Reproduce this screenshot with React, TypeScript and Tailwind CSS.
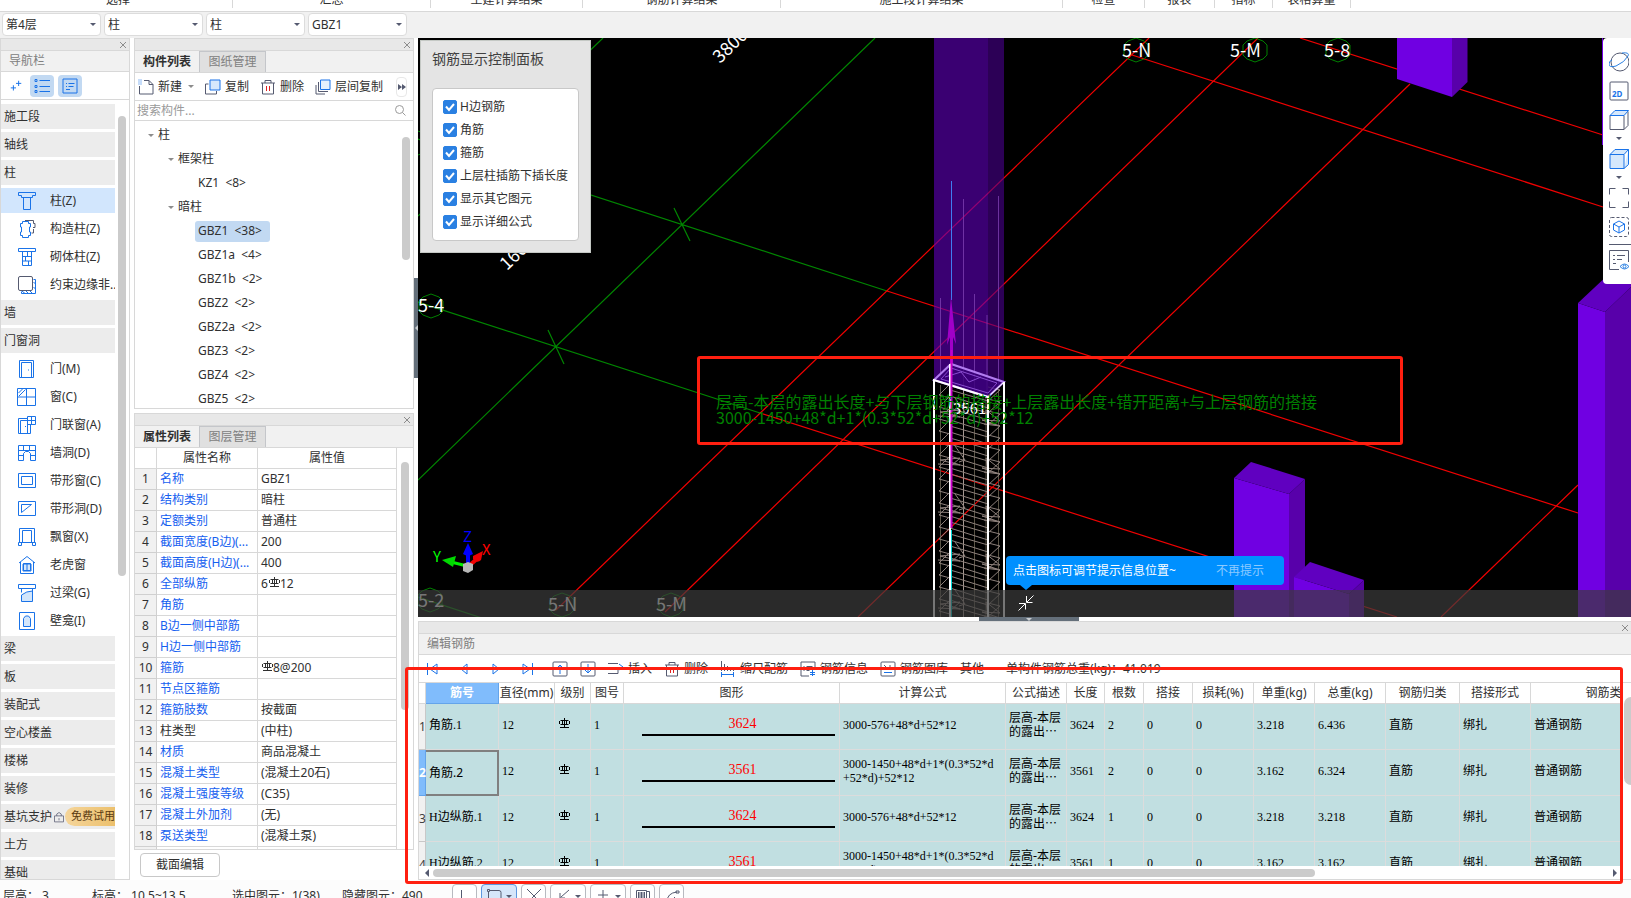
import type { ReactNode } from 'react';

const ribbonGroups = [
  { label: '选择', width: 'w-[233px] pl-1' },
  { label: '汇总', width: 'w-[198px]' },
  { label: '土建计算结果', width: 'w-[152px]' },
  { label: '钢筋计算结果', width: 'w-[198px]' },
  { label: '施工段计算结果', width: 'w-[282px]' },
  { label: '检查', width: 'w-[82px]' },
  { label: '报表', width: 'w-[70px]' },
  { label: '指标', width: 'w-[58px]' },
  { label: '表格算量', width: 'w-[78px]' },
];

const filters = [
  { name: '楼层', value: '第4层' },
  { name: '构件大类', value: '柱' },
  { name: '构件类型', value: '柱' },
  { name: '构件', value: 'GBZ1' },
];

type NavEntry = { label: string; icon?: ReactNode; trial?: boolean; active?: boolean };

const navEntries: NavEntry[] = [
  { label: '施工段' },
  { label: '轴线' },
  { label: '柱' },
  {
    label: '柱(Z)',
    active: true,
    icon: <path d="M1.500 1.500h17v3h-3v2h-11v-2h-3zM6.500 6.500v12h7v-12" />,
  },
  {
    label: '构造柱(Z)',
    icon: (
      <>
        <path d="M8 1.500h8.500v3h1.500v4h-2M16.500 10v4h-2" stroke="#555a70" />
        <path d="M5.500 2.500h6v2h2v3.500h-1v5h1v3.500h-2v2h-6v-2h-2V13h1V8h-1V4.500h2z" />
      </>
    ),
  },
  {
    label: '砌体柱(Z)',
    icon: <path d="M1.500 1.500h17v3h-17zM5.500 4.500v14h9v-14M5.500 9.500h9M5.500 14h9M10.500 4.500v5M8.500 9.500v4.500M11.500 14v4.500" />,
  },
  {
    label: '约束边缘非..',
    icon: (
      <>
        <path d="M5 16l3 2.500M9 16l2.500 2.500M13 16l2.500 2.500M16.500 12l2 2M16.500 7l2 2M4.500 16.500v2h14v-14h-2" />
        <rect x="1.500" y="1.500" width="14" height="14" rx="1.500" stroke="#555a70" fill="#fff" />
      </>
    ),
  },
  { label: '墙' },
  { label: '门窗洞' },
  { label: '门(M)', icon: <path d="M2.500 1.500h14v17h-14zM4.500 18.500v-15h10v15M11.500 10.500v1" /> },
  { label: '窗(C)', icon: <path d="M.5 1.500h18v17H.5zM9.500 1.500v17M.5 10h18M1.500 6l4-4M2 9l6.500-6.500" /> },
  {
    label: '门联窗(A)',
    icon: <path d="M10.500 3.500h-9v15h12v-9M3.500 18.500v-13h7v13M8.500 11v1M10.500 1.500h8v8h-8zM14.500 1.500v8M10.500 5.500h8" />,
  },
  {
    label: '墙洞(D)',
    icon: <path d="M1.500 2.500h17v15h-5v-7l-2-2h-3l-2 2v7h-5zM1.500 7.500h17M6.500 2.500v5M12.500 2.500v5M1.500 12.500h5M13.500 12.500h5" />,
  },
  { label: '带形窗(C)', icon: <path d="M1.500 2.500h17v14h-17zM4.500 5.500h11v8h-11z" /> },
  { label: '带形洞(D)', icon: <path d="M1.500 2.500h17v14h-17zM4.500 13.500v-8h10l-10 8" /> },
  { label: '飘窗(X)', icon: <path d="M2.500 1.500h15v14h-15zM5.500 3.500h9v12M5.500 3.500v12M1.500 15.500h3v3h-3zM15.500 15.500h3v3h-3z" /> },
  {
    label: '老虎窗',
    icon: (
      <>
        <path d="M6 9h8v7H6z" fill="#d3e6fb" />
        <path d="M2 8l8-6.500L18 8M3.500 7v11.500h13V7M6.500 8.500h7v7h-7zM10 8.500v7" />
      </>
    ),
  },
  {
    label: '过梁(G)',
    icon: (
      <>
        <path d="M4.500 12q5-4 11-4v10.500h-11z" fill="#d3e6fb" />
        <path d="M1.500 1.500h17v4h-17zM4.500 5.500v4M15.500 5.500v4" />
      </>
    ),
  },
  {
    label: '壁龛(I)',
    icon: (
      <>
        <path d="M2.500 1.500h15v17h-15z" />
        <path d="M6.500 15.500v-8l2-2.500h3l2 2.500v8z" fill="#d3e6fb" />
      </>
    ),
  },
  { label: '梁' },
  { label: '板' },
  { label: '装配式' },
  { label: '空心楼盖' },
  { label: '楼梯' },
  { label: '装修' },
  { label: '基坑支护', trial: true },
  { label: '土方' },
  { label: '基础' },
];

const components = ['GBZ1  <38>', 'GBZ1a  <4>', 'GBZ1b  <2>', 'GBZ2  <2>', 'GBZ2a  <2>', 'GBZ3  <2>', 'GBZ4  <2>', 'GBZ5  <2>'];

const properties: { name: string; value: ReactNode; plain?: boolean }[] = [
  { name: '名称', value: 'GBZ1' },
  { name: '结构类别', value: '暗柱' },
  { name: '定额类别', value: '普通柱' },
  { name: '截面宽度(B边)(...', value: '200' },
  { name: '截面高度(H边)(...', value: '400' },
  { name: '全部纵筋', value: <>6<Rebar />12</> },
  { name: '角筋', value: '' },
  { name: 'B边一侧中部筋', value: '' },
  { name: 'H边一侧中部筋', value: '' },
  { name: '箍筋', value: <><Rebar />8@200</> },
  { name: '节点区箍筋', value: '' },
  { name: '箍筋肢数', value: '按截面' },
  { name: '柱类型', value: '(中柱)', plain: true },
  { name: '材质', value: '商品混凝土' },
  { name: '混凝土类型', value: '(混凝土20石)' },
  { name: '混凝土强度等级', value: '(C35)' },
  { name: '混凝土外加剂', value: '(无)' },
  { name: '泵送类型', value: '(混凝土泵)' },
];

const displayOptions = ['H边钢筋', '角筋', '箍筋', '上层柱插筋下插长度', '显示其它图元', '显示详细公式'];

const columns = [
  { title: '', width: 'w-[7px]' },
  { title: '筋号', width: 'w-[73px]' },
  { title: '直径(mm)', width: 'w-[56px]' },
  { title: '级别', width: 'w-[36px]' },
  { title: '图号', width: 'w-[33px]' },
  { title: '图形', width: 'w-[216px]' },
  { title: '计算公式', width: 'w-[166px]' },
  { title: '公式描述', width: 'w-[61px]' },
  { title: '长度', width: 'w-[38px]' },
  { title: '根数', width: 'w-[39px]' },
  { title: '搭接', width: 'w-[49px]' },
  { title: '损耗(%)', width: 'w-[61px]' },
  { title: '单重(kg)', width: 'w-[61px]' },
  { title: '总重(kg)', width: 'w-[71px]' },
  { title: '钢筋归类', width: 'w-[74px]' },
  { title: '搭接形式', width: 'w-[71px]' },
  { title: '钢筋类型', width: 'w-[158px]' },
];

const longFormula = ['3000-1450+48*d+1*(0.3*52*d', '+52*d)+52*12'];

const bars = [
  { name: '角筋.1', length: '3624', formula: ['3000-576+48*d+52*12'], count: 2, unit: '3.218', total: '6.436' },
  { name: '角筋.2', length: '3561', formula: longFormula, count: 2, unit: '3.162', total: '6.324', current: true },
  { name: 'H边纵筋.1', length: '3624', formula: ['3000-576+48*d+52*12'], count: 1, unit: '3.218', total: '3.218' },
  { name: 'H边纵筋.2', length: '3561', formula: longFormula, count: 1, unit: '3.162', total: '3.162' },
];

function Rebar() {
  return (
    <svg className="inline h-3 w-3 align-baseline" viewBox="0 0 12 12" fill="none" stroke="currentColor">
      <path d="M6.500 1v10M2.500 3.500h8M1.500 4v3M11.500 4v3M2.500 7.500h8M4.500 3v5M8.500 3v5M2 10.500h9" />
    </svg>
  );
}

function Icon({ children, className = 'h-4 w-4' }: { children: ReactNode; className?: string }) {
  return (
    <svg className={`shrink-0 ${className}`} viewBox="0 0 16 16" fill="none" stroke="#555a70">
      {children}
    </svg>
  );
}

function Caret({ className = 'fill-[#555a70]' }: { className?: string }) {
  return (
    <svg className={`h-[3px] w-[6px] shrink-0 ${className}`} viewBox="0 0 6 3">
      <path d="M0 0h6L3 3z" />
    </svg>
  );
}

function CloseStrip() {
  return (
    <div className="flex h-3 shrink-0 items-center justify-end border-b border-[#d8d8d8] bg-[#e8e8e8] pr-0.5">
      <button type="button" aria-label="关闭">
        <svg className="h-2 w-2" viewBox="0 0 8 8" stroke="#8c8c8c">
          <path d="M1 1l6 6M7 1L1 7" />
        </svg>
      </button>
    </div>
  );
}

function Tabs({ labels }: { labels: [string, string] }) {
  return (
    <div className="flex h-[22px] shrink-0 border-b border-[#d8d8d8] bg-[#f1f1f1]">
      <button type="button" className="w-[65px] border-r border-[#c4c6ca] bg-[#f1f1f1] font-bold">
        {labels[0]}
      </button>
      <button type="button" className="w-[66px] border-t border-r border-[#c4c6ca] bg-[#e0e0e0] text-[#808080]">
        {labels[1]}
      </button>
    </div>
  );
}

function Trash() {
  return (
    <Icon>
      <path d="M1 4h14M5 4V1.500h6V4M2.500 4v11h11V4" />
      <path d="M6.500 7v5M9.500 7v5" stroke="#e02020" />
    </Icon>
  );
}

function Navigator() {
  return (
    <nav className="flex w-[130px] shrink-0 flex-col border border-[#d8d8d8] bg-white">
      <CloseStrip />
      <h2 className="flex h-[21px] shrink-0 items-center border-b border-[#d8d8d8] bg-[#f1f1f1] pl-2 text-[#808080]">导航栏</h2>
      <div className="flex h-7 shrink-0 items-center gap-1 border-b border-[#d8d8d8] pl-1">
        <button type="button" aria-label="收起" className="grid h-[22px] w-[21px] place-items-center">
          <Icon className="h-3 w-4">
            <path d="M4.500 7v7M1 10.500h7M11.500 1v7M8 4.500h7" stroke="#1a73e8" strokeWidth="1.300" />
          </Icon>
        </button>
        <button type="button" aria-label="列表" className="grid h-[22px] w-6 place-items-center rounded bg-[#c2d9f2]">
          <Icon>
            <path d="M5.500 2.500H16M5.500 8.500H16M5.500 13.500H16" stroke="#1a73e8" />
            <path d="M1 1.500h2v2H1zM1 7.500h2v2H1zM1 12.500h2v2H1z" stroke="#1a73e8" />
          </Icon>
        </button>
        <button type="button" aria-label="详情" className="grid h-[22px] w-6 place-items-center rounded bg-[#c2d9f2]">
          <Icon>
            <path d="M1 1h14v14H1zM4 5.500h1M6.500 5.500h6M4 8.500h1M6.500 8.500h5M4 11.500h4" stroke="#1a73e8" />
          </Icon>
        </button>
      </div>
      <div className="flex min-h-0 flex-1 overflow-hidden pt-1">
        <ul className="flex flex-1 flex-col gap-[3px] overflow-hidden">
          {navEntries.map((entry) =>
            entry.icon ? (
              <li key={entry.label} className="h-[25px] shrink-0">
                <button
                  type="button"
                  className={`flex h-full w-full items-center gap-[13px] pl-4 whitespace-nowrap ${entry.active ? 'bg-[#d2e6fd]' : ''}`}
                >
                  <svg className="h-5 w-5 shrink-0" viewBox="0 0 20 20" fill="none" stroke="#1a73e8">
                    {entry.icon}
                  </svg>
                  {entry.label}
                </button>
              </li>
            ) : (
              <li key={entry.label} className="h-[25px] shrink-0">
                <button type="button" className="flex h-full w-full items-center bg-[#ececec] pl-[3px] whitespace-nowrap">
                  {entry.label}
                  {entry.trial && (
                    <>
                      <Icon className="ml-px h-3 w-3">
                        <path d="M2 6.500h12v8H2zM5 6.500V4q3-4 6 0v2.500M8 9.500v3" />
                      </Icon>
                      <span className="flex h-[19px] flex-1 items-center rounded-l-full bg-linear-to-r from-[#f5d59a] to-[#ecc06c] pl-1.5 text-[11px] text-[#5a3a10]">
                        免费试用
                      </span>
                    </>
                  )}
                </button>
              </li>
            ),
          )}
        </ul>
        <div className="w-[14px] shrink-0 px-[3px] pt-3">
          <div className="h-[460px] rounded-full bg-[#cbcbcb]" />
        </div>
      </div>
    </nav>
  );
}

function ComponentPanel() {
  return (
    <section className="flex h-[371px] shrink-0 flex-col border border-[#d8d8d8] bg-white">
      <CloseStrip />
      <Tabs labels={['构件列表', '图纸管理']} />
      <div className="flex h-7 shrink-0 items-center gap-[11px] border-b border-[#d8d8d8] pl-[3px] whitespace-nowrap">
        <button type="button" className="flex items-center gap-1">
          <Icon>
            <path d="M6 1.500h5l4 4v9.500H1.500V7M11 1.500v4h4" />
            <path d="M.5 1h4M.5 3h4M.5 5h4" stroke="#1a73e8" strokeDasharray="1 1" />
          </Icon>
          新建
          <span className="pl-0.5">
            <Caret className="fill-[#8c8c8c]" />
          </span>
        </button>
        <button type="button" className="flex items-center gap-1">
          <Icon>
            <path d="M3.500 5h-3v10h11v-3" />
            <path d="M5 1h10v10H5z" stroke="#1a73e8" fill="#d6e8fc" />
          </Icon>
          复制
        </button>
        <button type="button" className="flex items-center gap-1">
          <Trash />
          删除
        </button>
        <button type="button" className="flex items-center gap-1">
          <Icon>
            <path d="M3.500 3v9.500H13M1 6v9h9" />
            <path d="M5.500 1H15v9.500H5.500z" stroke="#1a73e8" fill="#e4f0fd" />
          </Icon>
          层间复制
        </button>
        <button type="button" aria-label="更多" className="ml-0.5 grid h-5 w-[11px] place-items-center rounded border border-[#e8e8e8]">
          <svg className="h-1.5 w-2" viewBox="0 0 8 6" fill="#555a70">
            <path d="M0 0l4 3-4 3zM4 0l4 3-4 3z" />
          </svg>
        </button>
      </div>
      <label className="flex h-5 shrink-0 items-center border-b border-[#d8d8d8] pr-[7px] pl-0.5">
        <input
          type="text"
          aria-label="搜索构件"
          placeholder="搜索构件..."
          className="min-w-0 flex-1 outline-none placeholder:text-[#9a9a9a]"
        />
        <svg className="h-[11px] w-[11px]" viewBox="0 0 11 11" fill="none" stroke="#9a9a9a">
          <circle cx="4.500" cy="4.500" r="4" />
          <path d="M7.500 7.500l3 3" />
        </svg>
      </label>
      <div className="flex min-h-0 flex-1 overflow-hidden">
        <ul className="flex-1 overflow-hidden pt-0.5 whitespace-pre">
          <li className="flex h-6 items-center gap-1 pl-[13px]"><Caret className="fill-[#8c8c8c]" />柱</li>
          <li className="flex h-6 items-center gap-1 pl-[33px]"><Caret className="fill-[#8c8c8c]" />框架柱</li>
          <li className="flex h-6 items-center pl-[63px]">{'KZ1  <8>'}</li>
          <li className="flex h-6 items-center gap-1 pl-[33px]"><Caret className="fill-[#8c8c8c]" />暗柱</li>
          {components.map((name, i) => (
            <li key={name} className="flex h-6 items-center pl-[60px]">
              <span className={`flex h-[21px] items-center rounded-[3px] px-[3px] ${i === 0 ? 'w-[75px] bg-[#c2d9f2]' : ''}`}>{name}</span>
            </li>
          ))}
        </ul>
        <div className="w-[14px] px-[3px] pt-4">
          <div className="h-[123px] rounded-full bg-[#cbcbcb]" />
        </div>
      </div>
    </section>
  );
}

function PropertyPanel() {
  return (
    <>
      <section className="mt-1 flex min-h-0 flex-1 flex-col border border-[#d8d8d8] bg-white">
        <CloseStrip />
        <Tabs labels={['属性列表', '图层管理']} />
        <div className="flex min-h-0 flex-1 overflow-hidden">
          <div className="flex-1 overflow-hidden">
            <table className="w-full table-fixed border-separate border-spacing-0">
              <thead>
                <tr className="h-[21px]">
                  <th className="w-[22px] border-r border-b border-[#d8d8d8] p-0" />
                  <th className="w-[101px] border-r border-b border-[#d8d8d8] p-0 font-normal">属性名称</th>
                  <th className="border-r border-b border-[#d8d8d8] p-0 font-normal">属性值</th>
                </tr>
              </thead>
              <tbody>
                {properties.map((row, i) => (
                  <tr key={row.name} className="h-[21px]">
                    <td className="border-r border-b border-[#d0d0d0] bg-[#f1f1f1] p-0 text-center">{i + 1}</td>
                    <td className={`truncate border-r border-b border-[#d8d8d8] p-0 pl-[3px] ${row.plain ? '' : 'text-[#1560f0]'}`}>
                      {row.name}
                    </td>
                    <td className="border-r border-b border-[#d8d8d8] p-0 pl-[3px]">{row.value}</td>
                  </tr>
                ))}
                <tr className="h-[21px]">
                  <td className="border-r border-[#d0d0d0] bg-[#f1f1f1]" />
                  <td className="border-r border-[#d8d8d8]" />
                  <td className="border-r border-[#d8d8d8]" />
                </tr>
              </tbody>
            </table>
          </div>
          <div className="w-4 px-1 pt-[14px]">
            <div className="h-[248px] rounded-full bg-[#cbcbcb]" />
          </div>
        </div>
      </section>
      <div className="flex h-[30px] shrink-0 items-center bg-white pl-1.5">
        <button type="button" className="h-6 w-20 rounded border border-[#c8c8c8] bg-white">
          截面编辑
        </button>
      </div>
    </>
  );
}

const ties = Array.from({ length: 19 }, (_, i) => 382 + i * 12);

function Hexagon({ x, y }: { x: number; y: number }) {
  return (
    <polygon
      points={`${x - 12},${y - 5} ${x - 8},${y - 9} ${x},${y - 12} ${x + 8},${y - 9} ${x + 12},${y - 5} ${x + 12},${y + 5} ${x + 8},${y + 9} ${x},${y + 12} ${x - 8},${y + 9} ${x - 12},${y + 5}`}
      stroke="#008000"
      fill="none"
    />
  );
}

function Scene() {
  return (
    <svg className="h-full w-full" viewBox="418 38 1213 579" preserveAspectRatio="xMinYMin slice" fill="none">
      {/* Axis grid */}
      <g stroke="#008600" strokeWidth="1.200">
        <path d="M603 38L418 216M875 38L418 480M418 139L887 291M418 302L760 413M418 597L482 618M674 208L690 241M548 330L564 364" />
      </g>
      <g stroke="#f00000" strokeWidth="1.200">
        <path d="M1149 38L556 610M1258 38L665 612M1410 84L858 617M1578 485L1441 617M887 291L1578 513M760 413L1397 617M1132 55L1603 207M1300 38L1603 135" />
      </g>
      <Hexagon x={418} y={143} />
      <Hexagon x={1136} y={50} />
      <Hexagon x={1255} y={50} />
      <Hexagon x={1338} y={50} />
      <Hexagon x={431} y={306} />
      <Hexagon x={430} y={600} />
      <Hexagon x={562} y={605} />
      <Hexagon x={671} y={605} />
      <g fill="#fff" fontSize="18" className="font-['Noto_Sans_CJK_SC',sans-serif]">
        <text x="1122" y="57">5-N</text>
        <text x="1230" y="57">5-M</text>
        <text x="1324" y="57">5-8</text>
        <text x="418" y="312">5-4</text>
        <text x="418" y="607">5-2</text>
        <text x="548" y="611">5-N</text>
        <text x="656" y="611">5-M</text>
        <text transform="translate(720 64) rotate(-44)">3800</text>
        <text transform="translate(507 271) rotate(-44)">1600</text>
      </g>

      {/* Neighbouring columns */}
      <g fill="#7000e2">
        <path d="M1397 38h55v59l-55-18zM1578 303l27 9v305h-27zM1234 478l55 16v123h-55z" />
        <path d="M1602 38h1v107h-1z" />
      </g>
      <g fill="#5800aa">
        <path d="M1452 38h15.500v44L1452 97zM1605 312l26-25v330h-26zM1289 494l16-15v138h-16z" />
      </g>
      <path d="M1578 303l32-30h21v14l-26 25zM1234 478l17-16 54 17-16 15z" fill="#6000c0" />
      <path d="M1294 577l55 17v23h-55z" fill="#7000e2" />
      <path d="M1349 594l15-14v37h-15z" fill="#5800aa" />
      <path d="M1294 577l16-15 54 18-15 14z" fill="#6000c0" />

      {/* Selected column with its reinforcement cage */}
      <path d="M934 38h54v359l-54-17z" fill="#5c00b4" fillOpacity=".63" />
      <path d="M988 38h16v344l-16 15z" fill="#4a0090" fillOpacity=".6" />
      <g stroke="#7d3fb0" strokeOpacity=".8">
        <path d="M963.500 199V390M940.500 298V380M974.500 294V390M998.500 196V385M987 315V395" />
      </g>
      <path d="M951.500 181V300" stroke="#3f7df0" />
      <path d="M951 297l-4 48 3-8v28h3v-28l3 7z" fill="#a000c8" />
      <path d="M940.500 385V617M974.500 392V617M998.500 390V617M986 395V617" stroke="#5a5446" />
      <path d="M963.500 390V617" stroke="#a39690" />
      <g stroke="#8d807b" strokeWidth="1">
        {ties.map((y) => (
          <path
            key={y}
            d={`M939 ${y + 13}l11-11 38 12M939 ${y + 13}l11 3M950 ${y + 8}l38 11M988 ${y + 19}l12-11-12-3`}
          />
        ))}
        {[412, 460, 508, 556, 604].map((y) => (
          <path key={y} d={`M938 ${y + 4}l22 1-20-5 20-2-9 8M984 ${y + 12}l16 2-18-6 18 1-14-11 2 16M955 ${y - 14}l10 14-6 2`} />
        ))}
      </g>
      <path d="M934 380l17-16 53 18-16 15z" fill="#3a0078" fillOpacity=".8" stroke="#b27cf0" strokeWidth="2" />
      <path d="M941 379l10-11 46 15-9 10zM945 377l16-5 8 10 12-5" stroke="#8a4cd0" />
      <path d="M934 617V380l54 17v220M1004 617V382M950 364v253" stroke="#fff" strokeWidth="2" />
      <path d="M988 397l16-15" stroke="#fff" />
      <path d="M951.500 350V528" stroke="#c800c8" strokeWidth="2" />
      <path d="M951.500 530V617" stroke="#00d8d8" />

      <g className="font-['Noto_Sans_CJK_SC',sans-serif]">
        <text x="953" y="414" fontSize="15" fill="#fff">3561</text>
        <g fill="#008000" fontSize="16">
          <text x="716" y="408">
            层高-本层的露出长度+与下层钢筋的搭接+上层露出长度+错开距离+与上层钢筋的搭接
          </text>
          <text x="716" y="424">3000-1450+48*d+1*(0.3*52*d+52*d)+52*12</text>
        </g>
      </g>

      {/* Orientation gizmo */}
      <path d="M467 566l-16-4" stroke="#00f000" strokeWidth="3" />
      <path d="M442 560l14-4-3 11z" fill="#00d800" />
      <path d="M470 565l8-7" stroke="#f00000" strokeWidth="4" />
      <path d="M473 556l10-5-2 9q-4 4-8-1z" fill="#f00000" />
      <path d="M468 566v-14" stroke="#0000ff" strokeWidth="4" />
      <path d="M468 543l-5 11q5 3 10 0z" fill="#0000ff" />
      <path d="M463 564l5-2 5 2v6l-5 3-5-2z" fill="#b8b8b8" />
      <g fontSize="15" className="font-['Noto_Sans_CJK_SC',sans-serif]">
        <text x="463" y="542" fill="#0000ff">Z</text>
        <text x="482" y="555" fill="#ff0000">X</text>
        <text x="433" y="562" fill="#00ff00">Y</text>
      </g>
    </svg>
  );
}

function DisplayControls() {
  return (
    <div className="absolute top-0.5 left-0.5 w-[171px] border border-[#c4c8c4] bg-[#e4e4e4] px-[11px] pt-2 pb-[11px]">
      <h2 className="h-[39px] text-sm text-[#404040]">钢筋显示控制面板</h2>
      <div className="flex flex-col gap-[5px] rounded border border-[#c8c8c8] bg-white px-2.5 py-[9px]">
        {displayOptions.map((option) => (
          <label key={option} className="flex h-[18px] items-center gap-[3px] whitespace-nowrap">
            <span className="grid h-[14px] w-[14px] shrink-0">
              <input
                type="checkbox"
                defaultChecked
                className="peer col-start-1 row-start-1 h-[14px] w-[14px] appearance-none rounded-[2px] border border-[#2a80e2] checked:bg-[#2a80e2]"
              />
              <svg
                className="pointer-events-none invisible col-start-1 row-start-1 peer-checked:visible"
                viewBox="0 0 14 14"
                fill="none"
                stroke="#fff"
                strokeWidth="2"
              >
                <path d="M3 6.500l3 3.500 5-6" />
              </svg>
            </span>
            {option}
          </label>
        ))}
      </div>
    </div>
  );
}

const viewTools: { name: string; art: ReactNode; menu?: boolean }[] = [
  {
    name: '动态观察',
    art: (
      <>
        <circle cx="11" cy="10" r="9" />
        <path d="M13 1q8-1 6 3-3 6-12 10-7 2-7-2 0-3 3-4" stroke="#2a80e2" />
      </>
    ),
  },
  {
    name: '2D',
    art: (
      <>
        <rect x="1" y="1" width="18" height="18" rx="1" />
        <text x="3" y="16" fontSize="8" fontWeight="700" fill="#1a73e8" stroke="none">2D</text>
      </>
    ),
  },
  {
    name: '视图',
    menu: true,
    art: (
      <>
        <path d="M1 5.500h14v14H1zM15 19.500l4-4v-14" />
        <path d="M1 5.500l5-5h13.500l-4.500 5z" stroke="#1a73e8" fill="#d6e8fc" />
      </>
    ),
  },
  {
    name: '显示样式',
    menu: true,
    art: <path d="M1 5.500h14v14H1zM1 5.500l5-5h13.500l-4.500 5M15 19.500l4.500-4V.5" stroke="#1a73e8" fill="#d6e8fc" />,
  },
  { name: '全屏', art: <path d="M.5 6.500v-6h6M13.500.5h6v6M19.500 13.500v6h-6M6.500 19.500h-6v-6" /> },
  {
    name: '选择显示',
    art: (
      <>
        <rect x=".5" y=".5" width="19" height="19" rx="2" strokeDasharray="3 2" />
        <path d="M10 4l5.500 3v6L10 16l-5.500-3V7zM4.500 7l5.500 3 5.500-3M10 10v6" stroke="#1a73e8" />
      </>
    ),
  },
];

function ViewToolbar() {
  return (
    <div className="absolute top-0 right-0 flex h-[246px] w-7 flex-col items-start gap-[9px] rounded-l bg-white pt-[14px] pl-[6px]">
      {viewTools.map((tool) => (
        <button key={tool.name} type="button" aria-label={tool.name} className="flex flex-col items-center gap-[7px]">
          <svg className="h-5 w-5" viewBox="0 0 20 20" fill="none" stroke="#555a70">
            {tool.art}
          </svg>
          {tool.menu && <Caret />}
        </button>
      ))}
      <div className="-mt-0.5 h-px w-full bg-[#555a70]" />
      <button type="button" aria-label="显示设置" className="-mt-1">
        <svg className="h-5 w-5" viewBox="0 0 20 20" fill="none" stroke="#555a70">
          <path d="M10 19.500H.5V.5h19V12M4 5.500h2M8 5.500h8M4 9.500h2M8 9.500h5M4 13.500h3" />
          <path d="M11 16.500q4.500-5 9 0-4.500 5-9 0z" stroke="#2a80e2" />
          <circle cx="15.500" cy="16.500" r="1.500" stroke="#2a80e2" />
        </svg>
      </button>
    </div>
  );
}

function Viewport() {
  return (
    <section className="relative min-h-0 flex-1 overflow-hidden bg-black">
      <Scene />
      <div className="absolute inset-x-0 bottom-0 h-[27px] bg-[#3c3c3c]/70" />
      <div className="absolute top-[318px] left-[279px] h-[89px] w-[706px] rounded-[3px] border-3 border-[#ff1f10]" />
      <div className="absolute bottom-8 left-[588px] flex h-[29px] w-[278px] items-center justify-between rounded bg-[#0090ff] pr-5 pl-[7px] text-white">
        <span>点击图标可调节提示信息位置~</span>
        <button type="button" className="text-[#8ccaff]">不再提示</button>
        <svg className="absolute top-full left-[14px] h-[5px] w-3" viewBox="0 0 12 5" fill="#0090ff">
          <path d="M0 0h12L6 5z" />
        </svg>
      </div>
      <button type="button" aria-label="收起提示" className="absolute bottom-1.5 left-[600px]">
        <svg className="h-4 w-4" viewBox="0 0 16 16" fill="none" stroke="#fff">
          <path d="M15.500.5L9 7M8.500 1v6.500h6M.5 15.500L7 9M1 8.500h6.500v6" />
        </svg>
      </button>
      <DisplayControls />
      <ViewToolbar />
    </section>
  );
}

function StepButton({ name, d }: { name: string; d: string }) {
  return (
    <button type="button" aria-label={name} className="mr-4">
      <Icon>
        <path d={d} stroke="#1a73e8" />
      </Icon>
    </button>
  );
}

function ToolButton({ label, icon }: { label: string; icon: ReactNode }) {
  return (
    <button type="button" className="mr-3 flex items-center gap-1">
      {icon}
      {label}
    </button>
  );
}

function RebarEditor() {
  const cell = 'border-r border-b border-[#dcdcdc] bg-[#c1dfe1] p-0 pl-[3px] pb-1';
  return (
    <section className="relative flex shrink-0 flex-col border-l border-[#d8d8d8] bg-white">
      <div className="border-t border-[#d8d8d8]">
        <CloseStrip />
      </div>
      <h2 className="flex h-[21px] items-center border-b border-[#d8d8d8] bg-[#f1f1f1] pl-2 text-[#808080]">编辑钢筋</h2>
      <div className="flex h-[27px] items-center pl-[5px] whitespace-nowrap">
        <StepButton name="首条" d="M3.500 2v12M13 3v10L6 8z" />
        <StepButton name="上一条" d="M11 3v10L5 8z" />
        <StepButton name="下一条" d="M5 3v10l6-5z" />
        <StepButton name="末条" d="M12.500 2v12M3 3v10l7-5z" />
        <button type="button" aria-label="上移" className="mr-3">
          <Icon>
            <rect x="1" y="1" width="14" height="14" rx="1" />
            <path d="M8 13V4M5 7l3-3 3 3" stroke="#1a73e8" />
          </Icon>
        </button>
        <button type="button" aria-label="下移" className="mr-3">
          <Icon>
            <rect x="1" y="1" width="14" height="14" rx="1" />
            <path d="M8 3v9M5 9l3 3 3-3" stroke="#1a73e8" />
          </Icon>
        </button>
        <ToolButton
          label="插入"
          icon={
            <Icon>
              <path d="M0 2.500h10M0 7.500h10M0 12.500h10V7" />
              <path d="M11 3l4 3-4 3" stroke="#1a73e8" />
            </Icon>
          }
        />
        <ToolButton label="删除" icon={<Trash />} />
        <ToolButton
          label="缩尺配筋"
          icon={
            <Icon>
              <path d="M1.500 0v10M4.500 3v7M7.500 5v5M10.500 7v3M13.500 8v2" />
              <path d="M1 13.500h13M1.500 11v5M13.500 11v5" stroke="#1a73e8" />
            </Icon>
          }
        />
        <ToolButton
          label="钢筋信息"
          icon={
            <Icon>
              <path d="M9 15H1V1h14v7M3.500 5.500h1M6.500 5.500h6M3.500 9.500h1M6.500 9.500h3" />
              <path d="M12.500 9v6M10 11.500h5M10 13.500h5" stroke="#1a73e8" />
            </Icon>
          }
        />
        <ToolButton
          label="钢筋图库"
          icon={
            <Icon>
              <rect x="1" y="1" width="14" height="14" rx="1" />
              <path d="M4 4l2 2-2 2M9 5h2" />
              <path d="M4 11.500h8" stroke="#1a73e8" />
            </Icon>
          }
        />
        <button type="button" className="mr-2 flex items-center gap-2">
          其他
          <Caret className="fill-[#8c8c8c]" />
        </button>
        <span>单构件钢筋总重(kg)：41.019</span>
      </div>
      <div className="flex h-[184px] border-t border-[#d8d8d8]">
        <div className="min-w-0 flex-1 overflow-hidden">
          <table className="w-[1270px] table-fixed border-separate border-spacing-0">
            <thead>
              <tr className="h-[21px]">
                {columns.map((column, i) => (
                  <th
                    key={column.title}
                    className={`border-r border-b p-0 whitespace-nowrap ${column.width} ${
                      i === 1 ? 'border-[#64a4ea] bg-[#80bcfc] font-bold text-white' : 'border-[#d8d8d8] font-normal'
                    }`}
                  >
                    {column.title}
                  </th>
                ))}
              </tr>
            </thead>
            <tbody className="font-['Liberation_Serif','Noto_Sans_CJK_SC',serif] text-black">
              {bars.map((bar, i) => (
                <tr key={bar.name} className="h-[46px]">
                  <td
                    className={`border-r border-b p-0 text-center font-['Noto_Sans',sans-serif] ${
                      bar.current ? 'border-[#64a4ea] bg-[#80bcfc] font-bold text-white' : 'border-[#c8c8c8] bg-[#f1f1f1] text-[#404040]'
                    }`}
                  >
                    {i + 1}
                  </td>
                  <td
                    className={
                      bar.current
                        ? "border-2 border-l-0 border-[#808080] bg-[#c1dfe1] p-0 pl-[3px] font-['Noto_Sans','Noto_Sans_CJK_SC',sans-serif]"
                        : cell
                    }
                  >
                    {bar.name}
                  </td>
                  <td className={cell}>12</td>
                  <td className={`${cell} pl-1`}><Rebar /></td>
                  <td className={cell}>1</td>
                  <td className="border-r border-b border-[#dcdcdc] bg-[#c1dfe1] pt-0 pr-1 pb-[3px] pl-[18px] text-center text-sm leading-5 text-[#ff0000]">
                    <div className="border-b-2 border-black pl-2">{bar.length}</div>
                  </td>
                  <td className={cell}>
                    {bar.formula.map((line) => (
                      <div key={line} className="leading-[14px]">{line}</div>
                    ))}
                  </td>
                  <td className={`${cell} leading-[14px]`}>层高-本层的露出⋯</td>
                  <td className={cell}>{bar.length}</td>
                  <td className={cell}>{bar.count}</td>
                  <td className={cell}>0</td>
                  <td className={cell}>0</td>
                  <td className={cell}>{bar.unit}</td>
                  <td className={cell}>{bar.total}</td>
                  <td className={cell}>直筋</td>
                  <td className={cell}>绑扎</td>
                  <td className={cell}>普通钢筋</td>
                </tr>
              ))}
            </tbody>
          </table>
        </div>
        <div className="w-[11px] shrink-0 pt-[14px] pl-1">
          <div className="h-[88px] rounded-l-full bg-[#cbcbcb]" />
        </div>
      </div>
      <div className="flex h-[14px] items-center gap-1 border-b border-[#d8d8d8] pr-[14px] pl-1.5">
        <svg className="h-2 w-1" viewBox="0 0 4 8" fill="#555a70"><path d="M4 0v8L0 4z" /></svg>
        <div className="flex-1">
          <div className="h-2 w-3/4 rounded-full bg-[#cbcbcb]" />
        </div>
        <svg className="h-2 w-1" viewBox="0 0 4 8" fill="#555a70"><path d="M0 0v8l4-4z" /></svg>
      </div>
      <div className="pointer-events-none absolute top-[46px] right-2 -bottom-1 -left-[14px] z-10 rounded-[3px] border-3 border-[#ff1f10]" />
    </section>
  );
}

const snapTools = [
  { name: '正交', d: 'M4.500 2v9h8', wide: false },
  { name: '矩形选择', d: 'M1.500 1.500h2v2h-2zM4 2.500h9q2 0 2 2V14M2.500 4v10', wide: true },
  { name: '交点', d: 'M1 1l14 14M15 1L1 15', wide: false },
  { name: '垂点', d: 'M14 2L6 9M5 5v5h5', wide: true },
  { name: '中点', d: 'M8 2v10M3 7h10', wide: true },
  { name: '填充', d: 'M1.500 2.500h10v13h-10zM3.500 4v10M5 4v10M6.500 4v10M8 4v10M9.500 4v10M12 3.500h2.500v9', wide: false },
  { name: '圆弧', d: 'M3 14q0-9 10-10M12 3h3v2h-3zM10 9l5 5', wide: false },
];

function StatusBar() {
  return (
    <footer className="flex h-[18px] shrink-0 items-start overflow-hidden bg-[#fcfcfc] pl-[3px] whitespace-pre">
      <span className="mt-2 w-[89px]">层高： 3</span>
      <span className="mt-2 w-[140px]">标高： 10.5~13.5</span>
      <span className="mt-2 w-[110px]">选中图元：1(38)</span>
      <span className="mt-2 w-[110px]">隐藏图元：490</span>
      <div className="mt-1 flex gap-1">
        {snapTools.map((tool, i) => (
          <button
            key={tool.name}
            type="button"
            aria-label={tool.name}
            className={`flex h-6 items-center gap-1 rounded border pl-1 ${tool.wide ? 'w-9' : 'w-[25px]'} ${
              i === 1 ? 'border-[#5e97e0] bg-[#d6e6fa]' : 'border-[#b8bac0] bg-white'
            }`}
          >
            <Icon>
              <path d={tool.d} />
            </Icon>
            {tool.wide && <Caret />}
          </button>
        ))}
      </div>
    </footer>
  );
}

export default function App() {
  return (
    <div className="flex h-screen flex-col overflow-hidden bg-white font-['Noto_Sans','Noto_Sans_CJK_SC',sans-serif] text-xs text-[#303030]">
      <header className="flex h-3 shrink-0 overflow-hidden border-b border-[#d8d8d8] bg-white">
        {ribbonGroups.map((group) => (
          <div key={group.label} className={`flex h-2 shrink-0 items-end justify-center border-r border-[#d8d8d8] ${group.width}`}>
            {group.label}
          </div>
        ))}
      </header>
      <div className="flex h-[26px] shrink-0 gap-[3px] bg-[#f1f1f1] pt-px pl-0.5">
        {filters.map((filter) => (
          <div key={filter.name} className="relative h-[23px] w-[99px]">
            <select aria-label={filter.name} className="h-full w-full appearance-none rounded border border-[#dcdcdc] bg-white pl-[3px]">
              <option>{filter.value}</option>
            </select>
            <span className="pointer-events-none absolute top-2.5 right-[5px] flex">
              <Caret />
            </span>
          </div>
        ))}
      </div>
      <main className="flex min-h-0 flex-1">
        <Navigator />
        <div className="ml-1 flex w-[280px] shrink-0 flex-col">
          <ComponentPanel />
          <PropertyPanel />
        </div>
        <div className="w-1 shrink-0 pt-60">
          <button type="button" aria-label="折叠侧栏" className="flex h-[100px] w-1 items-center justify-center bg-[#646f7a]">
            <svg className="h-1.5 w-[3px]" viewBox="0 0 3 6" fill="#c8ccd0"><path d="M3 0v6L0 3z" /></svg>
          </button>
        </div>
        <div className="flex min-w-0 flex-1 flex-col">
          <Viewport />
          <div className="flex h-1 shrink-0 justify-center pl-2">
            <button type="button" aria-label="折叠面板" className="flex h-1 w-[100px] items-center justify-center bg-[#646f7a]">
              <Caret className="fill-[#c8ccd0]" />
            </button>
          </div>
          <RebarEditor />
        </div>
      </main>
      <StatusBar />
    </div>
  );
}
